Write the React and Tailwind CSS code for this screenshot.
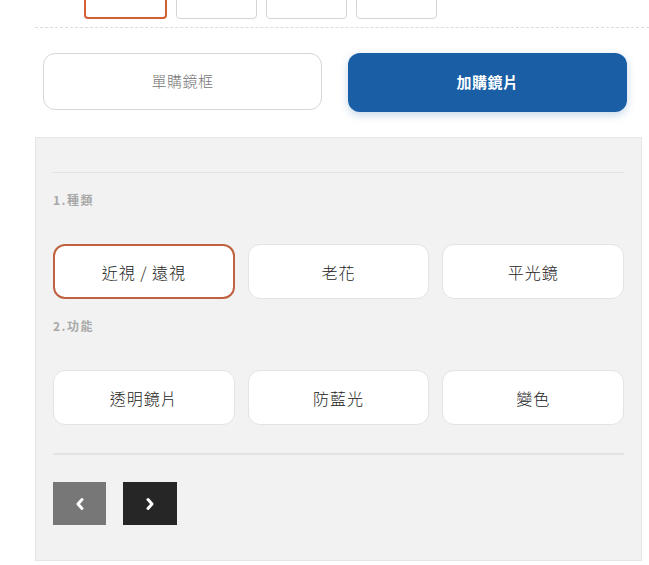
import React from "react";

const font = { fontFamily: '"Noto Sans CJK TC", "Noto Sans", sans-serif' };

function Chevron({ dir }) {
  return (
    <svg width="10" height="14" viewBox="0 0 10 14" fill="none">
      {dir === "left" ? (
        <path d="M7 2.5 L3 7 L7 11.5" stroke="white" strokeWidth="3" strokeLinecap="round" strokeLinejoin="round" />
      ) : (
        <path d="M3 2.5 L7 7 L3 11.5" stroke="white" strokeWidth="3" strokeLinecap="round" strokeLinejoin="round" />
      )}
    </svg>
  );
}

function Option({ label, selected }) {
  return (
    <button
      className={
        "h-[55px] rounded-[12px] bg-white flex items-center justify-center text-[16px] font-light tracking-[1px] text-[#222] " +
        (selected ? "border-2 border-[#c0623f]" : "border border-[#e3e3e3]")
      }
    >
      {label}
    </button>
  );
}

export default function App() {
  return (
    <div className="w-[649px] h-[565px] bg-white overflow-hidden pl-[35px]" style={font}>
      <div className="h-[19px] overflow-hidden flex items-end gap-[8px] pl-[49px]">
        <div className="w-[83px] h-[40px] shrink-0 rounded-[4px] border-2 border-[#d35f35] bg-white" />
        <div className="w-[81px] h-[40px] shrink-0 rounded-[4px] border border-[#d4d4d4] bg-white ml-[1px]" />
        <div className="w-[81px] h-[40px] shrink-0 rounded-[4px] border border-[#d4d4d4] bg-white ml-[1px]" />
        <div className="w-[81px] h-[40px] shrink-0 rounded-[4px] border border-[#d4d4d4] bg-white ml-[1px]" />
      </div>
      <div className="mt-[8px] border-t border-dashed border-[#dcdcdc]" />
      <div className="mt-[25px] pl-[8px] flex gap-[26px]">
        <button className="w-[279px] h-[57px] rounded-[12px] border border-[#d6d6d6] bg-white text-[15px] font-light tracking-[0.5px] text-[#777] flex items-center justify-center">
          單購鏡框
        </button>
        <button className="w-[279px] h-[59px] rounded-[12px] bg-[#1a5fa6] text-[15px] font-bold tracking-[0.5px] text-white flex items-center justify-center shadow-[0_3px_8px_rgba(26,95,166,0.25)]">
          加購鏡片
        </button>
      </div>
      <div className="mt-[25px] w-[607px] h-[424px] border border-[#e6e6e6] bg-[#f2f2f2] px-[17px] pt-[34px]">
        <div className="border-t border-[#e4e4e4]" />
        <div className="mt-[17px] h-[20px] flex items-center text-[12px] font-bold tracking-[1.5px] text-[#a8a8a8]">1.種類</div>
        <div className="mt-[34px] grid grid-cols-3 gap-[13px]">
          <Option label="近視 / 遠視" selected />
          <Option label="老花" />
          <Option label="平光鏡" />
        </div>
        <div className="mt-[17px] h-[20px] flex items-center text-[12px] font-bold tracking-[1.5px] text-[#a8a8a8]">2.功能</div>
        <div className="mt-[34px] grid grid-cols-3 gap-[13px]">
          <Option label="透明鏡片" />
          <Option label="防藍光" />
          <Option label="變色" />
        </div>
        <div className="mt-[28px] h-[2px] bg-[#e3e3e3]" />
        <div className="mt-[27px] flex gap-[17px]">
          <button className="w-[53px] h-[43px] bg-[#777] flex items-center justify-center">
            <Chevron dir="left" />
          </button>
          <button className="w-[54px] h-[43px] bg-[#262626] flex items-center justify-center">
            <Chevron dir="right" />
          </button>
        </div>
      </div>
    </div>
  );
}
